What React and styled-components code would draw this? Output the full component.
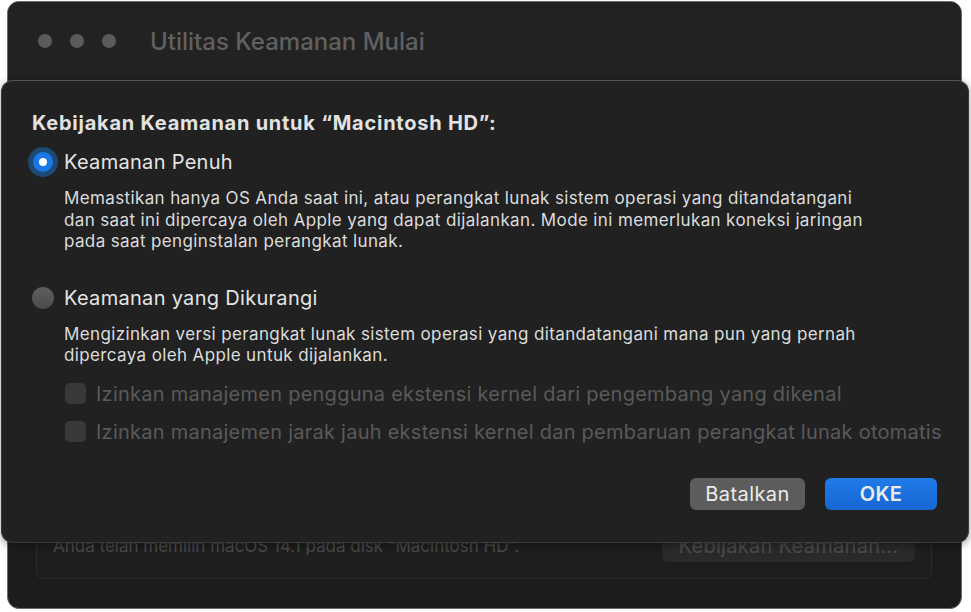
import React from "react";
import styled, { createGlobalStyle } from "styled-components";

const GlobalStyle = createGlobalStyle`
  html, body {
    margin: 0;
    padding: 0;
    background: #ffffff;
  }
  body {
    font-family: Inter, "Noto Sans", "Liberation Sans", sans-serif;
    -webkit-font-smoothing: antialiased;
  }
`;

const Stage = styled.div`
  position: relative;
  width: 971px;
  height: 612px;
  overflow: hidden;
  padding: 1px 0 0 7px;
  box-sizing: border-box;
`;

const Window = styled.div`
  width: 955px;
  height: 608px;
  box-sizing: border-box;
  border: 1px solid #6b6b6b;
  border-radius: 12px;
  background: #1c1c1c;
  display: flex;
  flex-direction: column;
  overflow: hidden;
`;

const TitleBar = styled.div`
  height: 78px;
  flex: none;
  display: flex;
  align-items: center;
  padding-left: 30px;
  background: #222222;
  border-bottom: 1px solid #262626;
`;

const Lights = styled.div`
  display: flex;
  gap: 18px;
  margin-right: 34px;
`;

const Light = styled.span`
  width: 14px;
  height: 14px;
  border-radius: 50%;
  background: #5b5b5b;
`;

const WindowTitle = styled.div`
  font-size: 24px;
  font-weight: 500;
  color: #606060;
`;

const WindowBody = styled.div`
  flex: 1;
  display: flex;
  padding: 20px 29px 29px 28px;
`;

const GroupBox = styled.div`
  flex: 1;
  border: 1px solid #2b2b2b;
  border-radius: 6px;
  background: #1e1e1e;
  display: flex;
  align-items: flex-end;
  padding: 0 16px 16px 16px;
`;

const InfoRow = styled.div`
  flex: 1;
  display: flex;
  align-items: center;
  justify-content: space-between;
`;

const InfoText = styled.div`
  font-size: 17px;
  color: #4a4a4a;
`;

const GhostButton = styled.div`
  width: 253px;
  height: 32px;
  border-radius: 6px;
  background: #2a2a2a;
  color: #4c4c4c;
  font-size: 20px;
  letter-spacing: 0.3px;
  display: flex;
  align-items: center;
  justify-content: center;
`;

const Sheet = styled.div`
  position: absolute;
  left: 1px;
  top: 80px;
  width: 968px;
  height: 463px;
  box-sizing: border-box;
  border-radius: 12px;
  border: 1px solid #3a3a3a;
  border-top-color: #555555;
  background: #212121;
  box-shadow: 0 2px 8px rgba(0, 0, 0, 0.4);
  padding: 30px 31px 0 30px;
  display: flex;
  flex-direction: column;
`;

const Heading = styled.div`
  font-size: 20px;
  line-height: 24px;
  font-weight: 700;
  letter-spacing: 0.75px;
  color: #e2e2e2;
`;

const OptionRow = styled.div`
  display: flex;
  align-items: center;
  height: 26px;
  margin-top: ${(p) => p.$top}px;
`;

const RadioSlot = styled.div`
  width: 22px;
  height: 22px;
  margin-right: 10px;
  display: flex;
  align-items: center;
  justify-content: center;
  flex: none;
`;

const Radio = styled.span`
  box-sizing: border-box;
  width: ${(p) => (p.$checked ? 20 : 22)}px;
  height: ${(p) => (p.$checked ? 20 : 22)}px;
  border-radius: 50%;
  display: flex;
  align-items: center;
  justify-content: center;
  background: ${(p) =>
    p.$checked ? "#1a78e6" : "linear-gradient(#5e5e5e, #4a4a4a)"};
  box-shadow: ${(p) => (p.$checked ? "0 0 0 5px rgba(28, 100, 170, 0.6)" : "none")};

  &::after {
    content: "";
    display: ${(p) => (p.$checked ? "block" : "none")};
    width: 8px;
    height: 8px;
    border-radius: 50%;
    background: #ffffff;
  }
`;

const OptionLabel = styled.div`
  font-size: 20px;
  letter-spacing: 0.3px;
  color: #e4e4e4;
`;

const Description = styled.div`
  margin: ${(p) => p.$top}px 0 0 32px;
  font-size: 17px;
  line-height: 21.5px;
  letter-spacing: 0.37px;
  color: #dcdcdc;
  white-space: nowrap;
`;

const CheckRow = styled.div`
  display: flex;
  align-items: center;
  height: 26px;
  margin: ${(p) => p.$top}px 0 0 33px;
`;

const Checkbox = styled.span`
  width: 21px;
  height: 21px;
  border-radius: 5px;
  background: #393939;
  margin-right: 10px;
  flex: none;
`;

const CheckLabel = styled.div`
  font-size: 20px;
  letter-spacing: 0.25px;
  color: #5a5a5a;
  white-space: nowrap;
`;

const Actions = styled.div`
  display: flex;
  justify-content: flex-end;
  gap: 20px;
  margin-top: 33px;
`;

const Button = styled.button`
  height: 32px;
  width: ${(p) => p.$width}px;
  border: none;
  border-radius: 6px;
  font-family: inherit;
  font-size: 20px;
  letter-spacing: 0.4px;
  font-weight: ${(p) => (p.$primary ? 600 : 400)};
  color: #ececec;
  background: ${(p) => (p.$primary ? "linear-gradient(#1f7ae8, #1767d2)" : "#5c5c5c")};
  padding: 0;
`;

export default function App() {
  return (
    <>
      <GlobalStyle />
      <Stage>
        <Window>
          <TitleBar>
            <Lights>
              <Light />
              <Light />
              <Light />
            </Lights>
            <WindowTitle>Utilitas Keamanan Mulai</WindowTitle>
          </TitleBar>
          <WindowBody>
            <GroupBox>
              <InfoRow>
                <InfoText>Anda telah memilih macOS 14.1 pada disk “Macintosh HD”.</InfoText>
                <GhostButton>Kebijakan Keamanan...</GhostButton>
              </InfoRow>
            </GroupBox>
          </WindowBody>
        </Window>

        <Sheet>
          <Heading>Kebijakan Keamanan untuk “Macintosh HD”:</Heading>

          <OptionRow $top={14}>
            <RadioSlot>
              <Radio $checked />
            </RadioSlot>
            <OptionLabel>Keamanan Penuh</OptionLabel>
          </OptionRow>
          <Description $top={13}>
            Memastikan hanya OS Anda saat ini, atau perangkat lunak sistem operasi yang ditandatangani
            <br />
            dan saat ini dipercaya oleh Apple yang dapat dijalankan. Mode ini memerlukan koneksi jaringan
            <br />
            pada saat penginstalan perangkat lunak.
          </Description>

          <OptionRow $top={32}>
            <RadioSlot>
              <Radio />
            </RadioSlot>
            <OptionLabel>Keamanan yang Dikurangi</OptionLabel>
          </OptionRow>
          <Description $top={13}>
            Mengizinkan versi perangkat lunak sistem operasi yang ditandatangani mana pun yang pernah
            <br />
            dipercaya oleh Apple untuk dijalankan.
          </Description>

          <CheckRow $top={14}>
            <Checkbox />
            <CheckLabel>Izinkan manajemen pengguna ekstensi kernel dari pengembang yang dikenal</CheckLabel>
          </CheckRow>
          <CheckRow $top={12}>
            <Checkbox />
            <CheckLabel>
              Izinkan manajemen jarak jauh ekstensi kernel dan pembaruan perangkat lunak otomatis
            </CheckLabel>
          </CheckRow>

          <Actions>
            <Button $width={115}>Batalkan</Button>
            <Button $primary $width={112}>
              OKE
            </Button>
          </Actions>
        </Sheet>
      </Stage>
    </>
  );
}
